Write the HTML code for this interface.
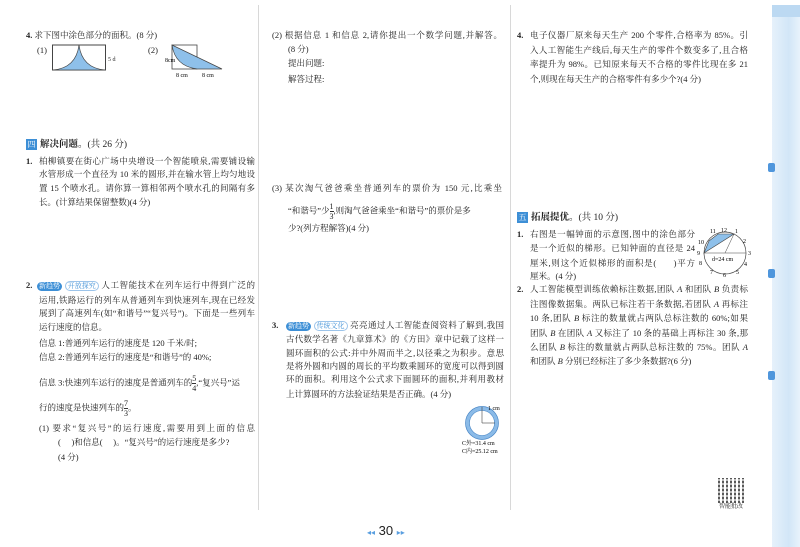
<!DOCTYPE html>
<html><head><meta charset="utf-8"><style>
html,body{margin:0;padding:0}
body{width:800px;height:547px;position:relative;overflow:hidden;background:#fff;font-family:"Liberation Serif","Noto Serif CJK SC",serif;color:#222;font-size:8.5px}
.t{position:absolute;white-space:nowrap;line-height:12px}
.j{text-align:justify;text-align-last:justify;white-space:normal;overflow:hidden;height:12px}
.L{left:39px;width:216px}
.M{left:286px;width:218px}
.R{left:530px;width:218px}
.vl{position:absolute;width:1px;background:#d8d8d8}
.sec{display:inline-block;width:11px;height:11px;background:#3d8fd6;color:#fff;font-size:8px;text-align:center;line-height:11px;margin-right:3px}
.tag{display:inline-block;background:#3d8fd6;color:#fff;font-size:7px;border-radius:5px;padding:0 2px;line-height:9px}
.tag2{display:inline-block;color:#3d8fd6;font-size:7px;border:1px solid #9cc4ea;border-radius:5px;padding:0 2px;line-height:8px}
b{font-weight:bold}
.fr{display:inline-block;vertical-align:middle;text-align:center;font-size:8px;line-height:9px}
.fr span{display:block;border-bottom:1px solid #333}
</style></head><body>
<div class="vl" style="left:258px;top:5px;height:505px"></div>
<div class="vl" style="left:510px;top:5px;height:505px"></div>
<div style="position:absolute;left:772px;top:5px;width:28px;height:542px;background:linear-gradient(90deg,#e6f1fb,#d2e6f7 60%,#e8f3fc)"></div>
<div style="position:absolute;left:772px;top:5px;width:28px;height:12px;background:#bcd9f2"></div>
<div style="position:absolute;left:768px;top:163px;width:7px;height:9px;background:#4f96dc;border-radius:2px"></div>
<div style="position:absolute;left:768px;top:269px;width:7px;height:9px;background:#4f96dc;border-radius:2px"></div>
<div style="position:absolute;left:768px;top:371px;width:7px;height:9px;background:#4f96dc;border-radius:2px"></div>

<!-- left column -->
<div class="t" style="left:26px;top:29px"><b>4.</b> 求下图中涂色部分的面积。(8 分)</div>
<div class="t" style="left:37px;top:44px">(1)</div>
<svg style="position:absolute;left:52px;top:44px" width="64" height="30"><rect x="0.5" y="1" width="53" height="25" fill="none" stroke="#444"/><path d="M1,26 Q24,24 27,1 Q30,24 53,26 Z" fill="#8ec0ea" stroke="#444" stroke-width=".7"/><text x="56" y="17" font-size="6" fill="#333">5 dm</text></svg>
<div class="t" style="left:148px;top:44px">(2)</div>
<svg style="position:absolute;left:165px;top:42px" width="60" height="38"><rect x="7" y="3" width="25" height="24" fill="none" stroke="#444" stroke-width=".8"/><path d="M7,3 Q10,24 32,27 L57,27 Z" fill="#8ec0ea" stroke="#444" stroke-width=".7"/><text x="0" y="20" font-size="6">8cm</text><text x="11" y="35" font-size="6">8 cm</text><text x="37" y="35" font-size="6">8 cm</text></svg>

<div class="t" style="left:26px;top:139px;font-size:9.5px"><span class="sec">四</span><b>解决问题</b>。(共 26 分)</div>
<div class="t" style="left:26px;top:155px"><b>1.</b></div>
<div class="t j L" style="top:155px">柏柳镇要在街心广场中央增设一个智能喷泉,需要铺设输</div>
<div class="t j L" style="top:168px">水管形成一个直径为 10 米的圆形,并在输水管上均匀地设</div>
<div class="t j L" style="top:182px">置 15 个喷水孔。请你算一算相邻两个喷水孔的间隔有多</div>
<div class="t L" style="top:196px">长。(计算结果保留整数)(4 分)</div>

<div class="t" style="left:26px;top:279px"><b>2.</b></div>
<div class="t j" style="left:37px;width:218px;top:279px"><span class="tag">新趋势</span> <span class="tag2">开放探究</span> 人工智能技术在列车运行中得到广泛的</div>
<div class="t j L" style="top:294px">运用,铁路运行的列车从普通列车到快速列车,现在已经发</div>
<div class="t j L" style="top:307px">展到了高速列车(如“和谐号”“复兴号”)。下面是一些列车</div>
<div class="t L" style="top:321px">运行速度的信息。</div>
<div class="t L" style="top:337px">信息 1:普通列车运行的速度是 120 千米/时;</div>
<div class="t L" style="top:351px">信息 2:普通列车运行的速度是“和谐号”的 40%;</div>
<div class="t L" style="top:374px">信息 3:快速列车运行的速度是普通列车的<span class="fr"><span>5</span>4</span>,“复兴号”运</div>
<div class="t L" style="top:399px">行的速度是快速列车的<span class="fr"><span>7</span>3</span>。</div>
<div class="t j L" style="top:422px">(1) 要求“复兴号”的运行速度,需要用到上面的信息</div>
<div class="t" style="left:58px;top:436px">(&nbsp;&nbsp;&nbsp;&nbsp;&nbsp;)和信息(&nbsp;&nbsp;&nbsp;&nbsp;&nbsp;)。“复兴号”的运行速度是多少?</div>
<div class="t" style="left:58px;top:451px">(4 分)</div>

<!-- middle column -->
<div class="t j" style="left:272px;width:230px;top:29px">(2) 根据信息 1 和信息 2,请你提出一个数学问题,并解答。</div>
<div class="t" style="left:288px;top:43px">(8 分)</div>
<div class="t" style="left:288px;top:57px">提出问题:</div>
<div class="t" style="left:288px;top:73px">解答过程:</div>
<div class="t j" style="left:272px;width:230px;top:182px">(3) 某次淘气爸爸乘坐普通列车的票价为 150 元,比乘坐</div>
<div class="t" style="left:288px;top:202px">“和谐号”少<span class="fr"><span>1</span>3</span>,则淘气爸爸乘坐“和谐号”的票价是多</div>
<div class="t" style="left:288px;top:222px">少?(列方程解答)(4 分)</div>

<div class="t" style="left:272px;top:319px"><b>3.</b></div>
<div class="t j M" style="top:319px"><span class="tag">新趋势</span> <span class="tag2">传统文化</span> 亮亮通过人工智能查阅资料了解到,我国</div>
<div class="t j M" style="top:333px">古代数学名著《九章算术》的《方田》章中记载了这样一种求</div>
<div class="t j M" style="top:347px">圆环面积的公式:并中外周而半之,以径乘之为积步。意思</div>
<div class="t j M" style="top:360px">是将外圆和内圆的周长的平均数乘圆环的宽度可以得到圆</div>
<div class="t j M" style="top:373px">环的面积。利用这个公式求下面圆环的面积,并利用教材</div>
<div class="t M" style="top:388px">上计算圆环的方法验证结果是否正确。(4 分)</div>
<svg style="position:absolute;left:460px;top:402px" width="60" height="56"><circle cx="22" cy="21" r="14.5" fill="none" stroke="#8bbbe8" stroke-width="4"/><circle cx="22" cy="21" r="16.5" fill="none" stroke="#4a87c6" stroke-width=".7"/><circle cx="22" cy="21" r="12.5" fill="none" stroke="#4a87c6" stroke-width=".6"/><line x1="22" y1="21" x2="22" y2="5" stroke="#444" stroke-width=".6"/><line x1="22" y1="21" x2="35" y2="21" stroke="#444" stroke-width=".6"/><text x="28" y="8" font-size="6">1 cm</text><text x="2" y="43" font-size="6">C外=31.4 cm</text><text x="2" y="51" font-size="6">C内=25.12 cm</text></svg>

<!-- right column -->
<div class="t" style="left:517px;top:29px"><b>4.</b></div>
<div class="t j R" style="top:29px">电子仪器厂原来每天生产 200 个零件,合格率为 85%。引</div>
<div class="t j R" style="top:44px">入人工智能生产线后,每天生产的零件个数变多了,且合格</div>
<div class="t j R" style="top:58px">率提升为 98%。已知原来每天不合格的零件比现在多 21</div>
<div class="t R" style="top:73px">个,则现在每天生产的合格零件有多少个?(4 分)</div>

<div class="t" style="left:517px;top:212px;font-size:9.5px"><span class="sec">五</span><b>拓展提优</b>。(共 10 分)</div>
<div class="t" style="left:517px;top:228px"><b>1.</b></div>
<div class="t j" style="left:530px;width:165px;top:228px">右图是一幅钟面的示意图,图中的涂色部分</div>
<div class="t j" style="left:530px;width:165px;top:242px">是一个近似的梯形。已知钟面的直径是 24</div>
<div class="t j" style="left:530px;width:165px;top:257px">厘米,则这个近似梯形的面积是(&nbsp;&nbsp;&nbsp;&nbsp;&nbsp;&nbsp;)平方</div>
<div class="t" style="left:530px;top:270px">厘米。(4 分)</div>
<svg style="position:absolute;left:697px;top:227px" width="56" height="52"><circle cx="28" cy="26" r="21" fill="none" stroke="#444" stroke-width=".7"/><path d="M7,26 L12,14 L21,7 L37,7 Z" fill="#8ec0ea" stroke="#444" stroke-width=".6"/><line x1="7" y1="26" x2="49" y2="26" stroke="#444" stroke-width=".6"/><line x1="28" y1="26" x2="37" y2="7" stroke="#444" stroke-width=".5"/><text x="15" y="34" font-size="6">d=24 cm</text><text x="24" y="5" font-size="6">12</text><text x="38" y="6" font-size="6">1</text><text x="13" y="6" font-size="6">11</text><text x="1" y="17" font-size="6">10</text><text x="0" y="28" font-size="6">9</text><text x="51" y="28" font-size="6">3</text><text x="46" y="16" font-size="6">2</text><text x="2" y="38" font-size="6">8</text><text x="47" y="39" font-size="6">4</text><text x="26" y="50" font-size="6">6</text><text x="13" y="47" font-size="6">7</text><text x="39" y="47" font-size="6">5</text></svg>
<div class="t" style="left:517px;top:283px"><b>2.</b></div>
<div class="t j R" style="top:283px">人工智能模型训练依赖标注数据,团队 <i>A</i> 和团队 <i>B</i> 负责标</div>
<div class="t j R" style="top:298px">注图像数据集。两队已标注若干条数据,若团队 <i>A</i> 再标注</div>
<div class="t j R" style="top:312px">10 条,团队 <i>B</i> 标注的数量就占两队总标注数的 60%;如果</div>
<div class="t j R" style="top:327px">团队 <i>B</i> 在团队 <i>A</i> 又标注了 10 条的基础上再标注 30 条,那</div>
<div class="t j R" style="top:341px">么团队 <i>B</i> 标注的数量就占两队总标注数的 75%。团队 <i>A</i></div>
<div class="t R" style="top:355px">和团队 <i>B</i> 分别已经标注了多少条数据?(6 分)</div>

<div style="position:absolute;left:718px;top:478px;width:27px;height:25px;background:repeating-linear-gradient(90deg,#222 0 2px,#fff 2px 4px),#222;opacity:.75"></div>
<div style="position:absolute;left:718px;top:478px;width:27px;height:25px;background:repeating-linear-gradient(0deg,transparent 0 2px,rgba(255,255,255,.6) 2px 4px)"></div>
<div class="t" style="left:719px;top:504px;font-size:6px;line-height:7px">智能批改</div>

<div class="t" style="left:367px;top:523px;font-size:13px;line-height:16px;font-family:'Liberation Sans',sans-serif"><span style="color:#5a9fe0;font-size:8px">◂◂</span> 30 <span style="color:#5a9fe0;font-size:8px">▸▸</span></div>
</body></html>
